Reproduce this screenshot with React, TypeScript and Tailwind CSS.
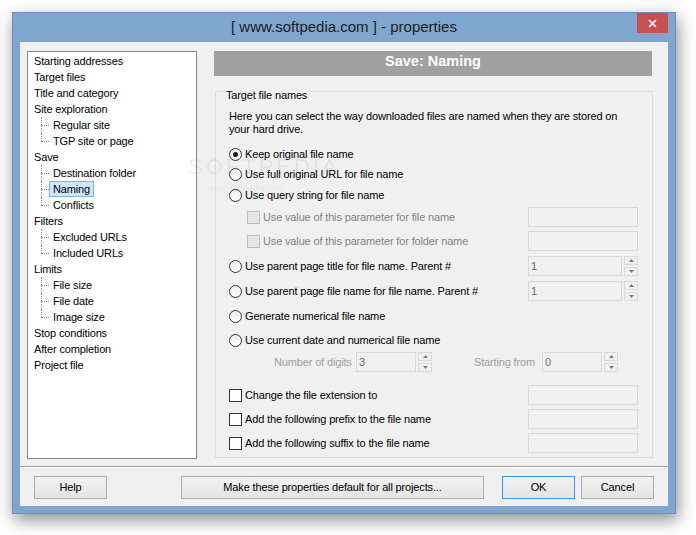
import React from 'react';
import { clsx } from 'clsx';

const tree: { label: string; children?: string[] }[] = [
  { label: 'Starting addresses' },
  { label: 'Target files' },
  { label: 'Title and category' },
  { label: 'Site exploration', children: ['Regular site', 'TGP site or page'] },
  { label: 'Save', children: ['Destination folder', 'Naming', 'Conflicts'] },
  { label: 'Filters', children: ['Excluded URLs', 'Included URLs'] },
  { label: 'Limits', children: ['File size', 'File date', 'Image size'] },
  { label: 'Stop conditions' },
  { label: 'After completion' },
  { label: 'Project file' },
];

function TreeChild({ label, last, selected }: { label: string; last: boolean; selected: boolean }) {
  return (
    <div className="flex h-[16px] items-center">
      <div className="relative h-full w-[15px] shrink-0">
        <div
          className={clsx(
            'absolute left-[7px] top-0 border-l border-dotted border-[#8c8c8c]',
            last ? 'h-[8px]' : 'h-full',
          )}
        />
        <div className="absolute left-[7px] top-[8px] w-[8px] border-t border-dotted border-[#8c8c8c]" />
      </div>
      <span
        className={clsx(
          'border px-[3px] leading-[14px]',
          selected ? 'border-[#7eb4ea] bg-[#cce8ff]' : 'border-transparent',
        )}
      >
        {label}
      </span>
    </div>
  );
}

function Radio({ checked = false }: { checked?: boolean }) {
  return (
    <span className="flex h-[13px] w-[13px] shrink-0 items-center justify-center rounded-full border border-[#333] bg-gradient-to-b from-[#ececec] to-white">
      {checked && <span className="h-[5px] w-[5px] rounded-full bg-[#1a1a1a]" />}
    </span>
  );
}

function Check({ disabled = false }: { disabled?: boolean }) {
  return (
    <span
      className={clsx(
        'h-[13px] w-[13px] shrink-0 border',
        disabled ? 'border-[#bcbcbc] bg-[#e6e6e6]' : 'border-[#333] bg-white',
      )}
    />
  );
}

function Box({ className, value }: { className?: string; value?: string }) {
  return (
    <div
      className={clsx(
        'flex h-[20px] items-center border border-[#d9d9d9] bg-[#f0f0f0] pl-[2px] text-[#6d6d6d]',
        className,
      )}
    >
      {value}
    </div>
  );
}

function Spin() {
  return (
    <div className="ml-[2px] flex h-[20px] w-[14px] flex-col justify-between">
      {[0, 1].map((i) => (
        <div key={i} className="flex h-[9px] items-center justify-center border border-[#d9d9d9] bg-[#f0f0f0]">
          <svg width="5" height="3" viewBox="0 0 5 3">
            <path d={i === 0 ? 'M0 3 L2.5 0 L5 3 Z' : 'M0 0 L2.5 3 L5 0 Z'} fill="#7a7a7a" />
          </svg>
        </div>
      ))}
    </div>
  );
}

function Button({ children, className }: { children: React.ReactNode; className?: string }) {
  return (
    <div
      className={clsx(
        'flex h-[23px] items-center justify-center border bg-gradient-to-b from-[#f2f2f2] to-[#e4e4e4]',
        className,
      )}
    >
      {children}
    </div>
  );
}

export default function App() {
  return (
    <div className="relative h-[535px] w-[696px] bg-white pl-[12px] pt-[12px] font-['Liberation_Sans',Arial,sans-serif] text-[11px] tracking-[-0.15px] text-black">
      <div className="flex h-[502px] w-[664px] flex-col border border-[#6b8fb6] bg-[#7ea6cf] shadow-[2px_6px_16px_rgba(0,0,0,0.45)]">
        {/* title bar */}
        <div className="relative flex h-[29px] items-center justify-center text-[15px] tracking-normal text-[#1b1b1b]">
          [ www.softpedia.com ] - properties
          <div className="absolute right-[7px] top-0 flex h-[20px] w-[31px] items-center justify-center bg-[#c75050]">
            <svg width="9" height="9" viewBox="0 0 9 9">
              <path d="M1 1 L8 8 M8 1 L1 8" stroke="white" strokeWidth="1.6" />
            </svg>
          </div>
        </div>

        {/* client */}
        <div className="mx-[7px] flex h-[464px] w-[648px] flex-col bg-[#f0f0f0]">
          <div className="flex h-[424px] pl-[7px] pt-[9px]">
            {/* tree */}
            <div className="h-[408px] w-[170px] shrink-0 border border-[#828790] bg-white pl-[6px] pt-[1px]">
              {tree.map((node) => (
                <div key={node.label}>
                  <div className="flex h-[16px] items-center">{node.label}</div>
                  {node.children?.map((c, i) => (
                    <TreeChild
                      key={c}
                      label={c}
                      last={i === node.children!.length - 1}
                      selected={c === 'Naming'}
                    />
                  ))}
                </div>
              ))}
            </div>

            {/* right side */}
            <div className="ml-[17px] w-[438px]">
              <div className="flex h-[25px] justify-center bg-[#a0a0a0] pt-[1px] text-[14.5px] font-bold leading-[18px] tracking-normal text-white">
                Save: Naming
              </div>

              <fieldset className="relative ml-[1px] mt-[5px] h-[377px] w-[438px] border border-[#d5dfe5] pl-[13px] pr-[14px]">
                <legend className="ml-[-6px] px-[3px] pt-[8px] leading-[13px]">Target file names</legend>

                <p className="mt-[8px] whitespace-nowrap leading-[13px]">
                  Here you can select the way downloaded files are named when they are stored on
                  <br />
                  your hard drive.
                </p>

                <div className="mt-[8px] flex h-[20px] items-center gap-[3px]">
                  <Radio checked />
                  Keep original file name
                </div>
                <div className="flex h-[20px] items-center gap-[3px]">
                  <Radio />
                  Use full original URL for file name
                </div>
                <div className="mt-[1px] flex h-[20px] items-center gap-[3px]">
                  <Radio />
                  Use query string for file name
                </div>

                <div className="mt-[2px] flex h-[20px] items-center">
                  <div className="flex w-[299px] items-center gap-[3px] pl-[18px] text-[#838383]">
                    <Check disabled />
                    Use value of this parameter for file name
                  </div>
                  <Box className="w-[110px]" />
                </div>
                <div className="mt-[4px] flex h-[20px] items-center">
                  <div className="flex w-[299px] items-center gap-[3px] pl-[18px] text-[#838383]">
                    <Check disabled />
                    Use value of this parameter for folder name
                  </div>
                  <Box className="w-[110px]" />
                </div>

                <div className="mt-[5px] flex h-[20px] items-center">
                  <div className="flex w-[299px] items-center gap-[3px]">
                    <Radio />
                    Use parent page title for file name. Parent #
                  </div>
                  <Box className="w-[94px]" value="1" />
                  <Spin />
                </div>
                <div className="mt-[5px] flex h-[20px] items-center">
                  <div className="flex w-[299px] items-center gap-[3px]">
                    <Radio />
                    Use parent page file name for file name. Parent #
                  </div>
                  <Box className="w-[94px]" value="1" />
                  <Spin />
                </div>

                <div className="mt-[5px] flex h-[20px] items-center gap-[3px]">
                  <Radio />
                  Generate numerical file name
                </div>
                <div className="mt-[4px] flex h-[20px] items-center gap-[3px]">
                  <Radio />
                  Use current date and numerical file name
                </div>

                <div className="mt-[2px] flex h-[20px] items-center pl-[45px]">
                  <span className="w-[82px] text-[#a0a0a0]">Number of digits</span>
                  <Box className="w-[60px]" value="3" />
                  <Spin />
                  <span className="ml-[42px] w-[68px] text-[#a0a0a0]">Starting from</span>
                  <Box className="w-[60px]" value="0" />
                  <Spin />
                </div>

                {[
                  'Change the file extension to',
                  'Add the following prefix to the file name',
                  'Add the following suffix to the file name',
                ].map((t, i) => (
                  <div key={t} className={clsx('flex h-[20px] items-center', i === 0 ? 'mt-[13px]' : 'mt-[4px]')}>
                    <div className="flex w-[299px] items-center gap-[3px]">
                      <Check />
                      {t}
                    </div>
                    <Box className="w-[110px]" />
                  </div>
                ))}
              </fieldset>
            </div>
          </div>

          {/* separator */}
          <div className="border-t border-[#a0a0a0]" />
          <div className="border-t border-white" />

          {/* buttons */}
          <div className="flex items-center pl-[14px] pt-[8px]">
            <Button className="w-[73px] border-[#acacac]">Help</Button>
            <Button className="ml-[74px] w-[303px] border-[#acacac]">Make these properties default for all projects...</Button>
            <Button className="ml-[18px] w-[73px] border-[#3399ff]">OK</Button>
            <Button className="ml-[6px] w-[73px] border-[#acacac]">Cancel</Button>
          </div>
        </div>
      </div>

      {/* faint watermark */}
      <div className="pointer-events-none absolute left-[188px] top-[150px] text-[22px] tracking-[3px] text-black/[0.07]">
        SOFTPEDIA
      </div>
      <div className="pointer-events-none absolute left-[208px] top-[182px] text-[9px] text-black/[0.08]">
        www.softpedia.com
      </div>
    </div>
  );
}
